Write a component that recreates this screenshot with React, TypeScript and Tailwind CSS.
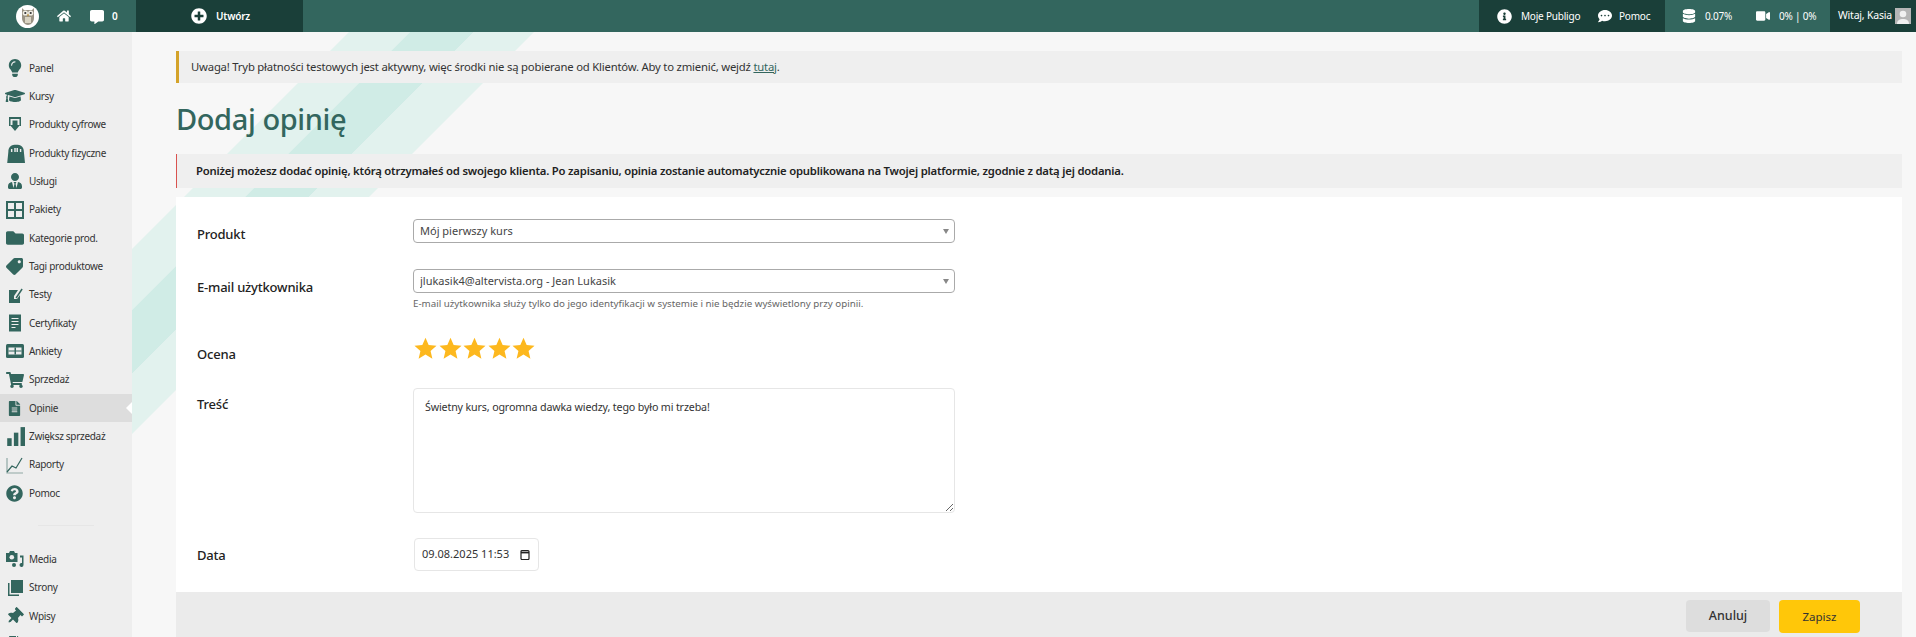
import React from "react";
import {
  FaLightbulb, FaGraduationCap, FaUserTie, FaFolder, FaTag, FaShoppingCart, FaFileAlt, FaQuestionCircle,
  FaThumbtack, FaHome, FaCommentAlt, FaPlusCircle, FaInfoCircle, FaCommentDots, FaDatabase, FaVideo,
} from "react-icons/fa";

const G = "#33665e";

const Svg = ({ children, w = 18, h = 18 }: { children: React.ReactNode; w?: number; h?: number }) => (
  <svg width={w} height={h} viewBox="0 0 18 18" fill={G}>{children}</svg>
);

const Digital = () => (
  <Svg><path d="M3 1h12v9h-1.500V3h-9v7H3z" /><path d="M6.500 4.500h5V9H14l-5 6-5-6h2.500z" /></Svg>
);
const Bag = () => (
  <Svg w={20} h={20}><path d="M3 8C3 3 6 1.500 10 1.500S17 3 17 8l1 10H2z" /><path d="M6 8V5.500M9 8V4.500M11 8V4.500M14 8V5.500" stroke="#eee" strokeWidth="1.300" /></Svg>
);
const Table = () => (
  <svg width="20" height="20" viewBox="0 0 20 20" fill="none" stroke={G} strokeWidth="2"><rect x="2" y="2" width="16" height="16" /><path d="M10 2v16M2 10h16" /></svg>
);
const Test = () => (
  <Svg><path d="M3 4h9L8 10v3h3l3-4v8H3z" /><path d="M9.500 11.500 15.500 2.500l1.200 0.900-6 9z" /></Svg>
);
const Cert = () => (
  <Svg><rect x="3" y="0.500" width="12" height="17" /><path d="M5.500 4.500h7M5.500 7.500h7M5.500 10.500h7M5.500 13.500h4" stroke="#eee" strokeWidth="1.200" /></Svg>
);
const Survey = () => (
  <svg width="20" height="18" viewBox="0 0 20 18" fill={G}><rect x="1" y="2" width="18" height="14" rx="1.500" /><path d="M3.500 5.500h13v7h-13z" fill="#eee" /><path d="M9.500 5.500h1.500v7H9.500zM3.500 8.500h13v1h-13z" fill={G} /></svg>
);
const Bars = () => (
  <Svg w={20} h={20}><rect x="2" y="11" width="4" height="7" /><rect x="8" y="6" width="4" height="12" /><rect x="14" y="1" width="4" height="17" /></Svg>
);
const Chart = () => (
  <svg width="20" height="20" viewBox="0 0 20 20" fill="none" stroke={G} strokeWidth="1.200"><path d="M2 3v15h16" opacity="0.500" /><path d="M2 17 7 11l4 2 6-10" /></svg>
);
const Media = () => (
  <svg width="20" height="18" viewBox="0 0 20 18" fill={G}><path d="M1 3h3l1-2h4l1 2h2.500v9H1z" /><circle cx="6.800" cy="7.200" r="2.300" fill="#eee" /><path d="M15 5.500h3.500V15a2 2 0 1 1-1.500-2V7.500h-2z" /><circle cx="9" cy="15" r="2" /></svg>
);
const Pages = () => (
  <Svg><path d="M5 1h12v13H5z" /><path d="M2 4h1.500v11.500H13V17H2z" /></Svg>
);
const Doc = () => <FaFileAlt size={15} color={G} />;

const menuTop: [string, React.ReactNode, boolean?][] = [
  ["Panel", <FaLightbulb size={18} color={G} />],
  ["Kursy", <FaGraduationCap size={20} color={G} />],
  ["Produkty cyfrowe", <Digital />],
  ["Produkty fizyczne", <Bag />],
  ["Usługi", <FaUserTie size={16} color={G} />],
  ["Pakiety", <Table />],
  ["Kategorie prod.", <FaFolder size={18} color={G} />],
  ["Tagi produktowe", <FaTag size={17} color={G} className="-scale-x-100" />],
  ["Testy", <Test />],
  ["Certyfikaty", <Cert />],
  ["Ankiety", <Survey />],
  ["Sprzedaż", <FaShoppingCart size={18} color={G} />],
  ["Opinie", <Doc />, true],
  ["Zwiększ sprzedaż", <Bars />],
  ["Raporty", <Chart />],
  ["Pomoc", <FaQuestionCircle size={17} color={G} />],
];
const menuBottom: [string, React.ReactNode][] = [
  ["Media", <Media />],
  ["Strony", <Pages />],
  ["Wpisy", <FaThumbtack size={17} color={G} className="rotate-45" />],
];

const Row = ({ label, icon, active }: { label: string; icon: React.ReactNode; active?: boolean }) => (
  <div className={`relative flex h-[28.33px] shrink-0 items-center ${active ? "bg-[#dddddd]" : ""}`}>
    <span className="flex w-[29px] shrink-0 justify-center">{icon}</span>
    <span className="text-[10px] tracking-[-0.3px] text-[#333333] whitespace-nowrap">{label}</span>
    {active && (
      <span className="absolute right-0 top-[8px] h-0 w-0 border-y-[6px] border-r-[6px] border-y-transparent border-r-white" />
    )}
  </div>
);

const Owl = () => (
  <svg width="16" height="20" viewBox="0 0 16 20">
    <path d="M2 2 4 4h8l2-2v10c0 4-3 7-6 7s-6-3-6-7z" fill="#9a9384" />
    <circle cx="5.300" cy="7" r="2.600" fill="#f2efe6" /><circle cx="10.700" cy="7" r="2.600" fill="#f2efe6" />
    <circle cx="5.300" cy="7" r="1.100" fill="#333" /><circle cx="10.700" cy="7" r="1.100" fill="#333" />
    <path d="M5 11h6v6H5z" fill="#d9d3c2" />
    <path d="M7 8.500h2L8 10.500z" fill="#d19a2a" />
  </svg>
);

const TopBar = () => (
  <header className="flex h-8 shrink-0 items-stretch bg-[#33665e] text-white text-[10px] tracking-[-0.2px] whitespace-nowrap">
    <div className="flex w-[136px] items-center">
      <span className="ml-4 flex h-[23px] w-[23px] items-center justify-center overflow-hidden rounded-full bg-white"><Owl /></span>
      <FaHome size={14} className="ml-[18px]" />
      <FaCommentAlt size={14} className="ml-[19px] mt-0.5" />
      <span className="ml-[8px] font-semibold">0</span>
    </div>
    <div className="flex w-[167px] items-center bg-[#1a3f39]">
      <FaPlusCircle size={16} className="ml-[55px]" />
      <span className="ml-[9px] font-semibold">Utwórz</span>
    </div>
    <div className="flex-1" />
    <div className="flex w-[186px] items-center bg-[#1a3f39]">
      <FaInfoCircle size={15} className="ml-[18px] shrink-0" />
      <span className="ml-[9px] w-[60px]">Moje Publigo</span>
      <FaCommentDots size={14} className="ml-[17px] shrink-0" />
      <span className="ml-[7px]">Pomoc</span>
    </div>
    <div className="flex w-[165px] items-center">
      <FaDatabase size={14} className="ml-[17px] shrink-0" />
      <span className="ml-[9px] w-[26px]">0.07%</span>
      <FaVideo size={14} className="ml-[25px] shrink-0" />
      <span className="ml-[9px]">0% | 0%</span>
    </div>
    <div className="flex w-[86px] items-center bg-[#1a3f39]">
      <span className="ml-2 w-[52px] text-[10.5px]">Witaj, Kasia</span>
      <span className="ml-[5px] flex h-4 w-4 items-end justify-center overflow-hidden bg-[#b5b5b5]">
        <svg width="16" height="16" viewBox="0 0 16 16" fill="#f0f0f0"><circle cx="8" cy="6" r="3.300" /><path d="M2 16c0-4 3-5 6-5s6 1 6 5z" /></svg>
      </span>
    </div>
  </header>
);

const Select = ({ value }: { value: string }) => (
  <div className="relative w-[542px]">
    <select defaultValue={value} className="block h-6 w-full appearance-none rounded-[4px] border border-[#aaaaaa] bg-white pl-[6px] text-[11px] text-[#444444] outline-none">
      <option>{value}</option>
    </select>
    <span className="absolute right-[6px] top-[10px] h-0 w-0 border-x-[3px] border-t-[5px] border-x-transparent border-t-[#888888]" />
  </div>
);

const Label = ({ children, className = "" }: { children: React.ReactNode; className?: string }) => (
  <div className={`h-[23px] w-[237px] shrink-0 pl-[21px] text-[13px] leading-4 tracking-[-0.2px] font-medium text-[#222222] ${className}`}>{children}</div>
);

const Star = () => (
  <svg width="23" height="23" viewBox="0 0 24 24" fill="#fdb81e"><path d="M12 0.800 15.300 8.400 23.500 9.100 17.300 14.500 19.200 22.600 12 18.300 4.800 22.600 6.700 14.500 0.500 9.100 8.700 8.400z" /></svg>
);

export default function App() {
  return (
    <div className="flex h-[637px] w-[1916px] flex-col overflow-hidden font-['Noto_Sans','Open_Sans',sans-serif] text-[#333333]">
      <TopBar />
      <div className="flex min-h-0 flex-1">
        <aside className="flex w-[132px] shrink-0 flex-col overflow-hidden bg-[#eeeeee] pt-[22px]">
          {menuTop.map(([l, i, a]) => <Row key={l} label={l} icon={i} active={a} />)}
          <div className="mx-[38px] mb-[19px] mt-[18px] h-px shrink-0 bg-[#e6e6e6]" />
          {menuBottom.map(([l, i]) => <Row key={l} label={l} icon={i} />)}
          <Row label="" icon={<FaFileAlt size={16} color={G} />} />
        </aside>
        <main className="relative min-w-0 flex-1 overflow-hidden bg-[#f7f7f7] pl-[44px] pr-[14px] pt-[19px]">
          <svg className="absolute left-0 top-0" width="420" height="420" viewBox="0 0 420 420">
            <polygon points="217,0 278,0 0,278 0,217" fill="#e2f2ee" />
            <polygon points="278,0 342,0 0,342 0,278" fill="#d0ece6" />
            <polygon points="342,0 402,0 0,402 0,342" fill="#e2f2ee" />
          </svg>
          <div className="relative flex flex-col">
            <div className="flex h-8 shrink-0 items-center border-l-[3px] border-[#d4a32a] bg-[#efefef] pl-3 text-[11.3px] tracking-[-0.2px] text-[#333333]">
              <span>Uwaga! Tryb płatności testowych jest aktywny, więc środki nie są pobierane od Klientów. Aby to zmienić, wejdź <span className="text-[#33665e] underline">tutaj</span>.</span>
            </div>
            <h1 className="mt-[14px] h-[57px] shrink-0 text-[29px] tracking-[-0.4px] font-medium leading-[44px] text-[#33665e]">Dodaj opinię</h1>
            <div className="flex h-[34px] shrink-0 items-center border-l border-[#d9534f] bg-[#efefef] pl-[19px] text-[11.3px] tracking-[-0.2px] font-semibold text-[#222222]">
              Poniżej możesz dodać opinię, którą otrzymałeś od swojego klienta. Po zapisaniu, opinia zostanie automatycznie opublikowana na Twojej platformie, zgodnie z datą jej dodania.
            </div>
            <section className="mt-[9px] flex shrink-0 flex-col bg-white pb-[21px] pt-[22px]">
              <div className="flex items-start">
                <Label className="pt-[7px]">Produkt</Label>
                <Select value="Mój pierwszy kurs" />
              </div>
              <div className="mt-[26px] flex items-start">
                <Label className="pt-[10px]">E-mail użytkownika</Label>
                <div>
                  <Select value="jlukasik4@altervista.org - Jean Lukasik" />
                  <p className="mt-1 h-[14px] text-[9.75px] leading-[14px] text-[#666666]">E-mail użytkownika służy tylko do jego identyfikacji w systemie i nie będzie wyświetlony przy opinii.</p>
                </div>
              </div>
              <div className="mt-[26px] flex items-start">
                <Label className="pt-[9px]">Ocena</Label>
                <div className="flex h-[23px] items-center gap-[1.6px] pl-px">
                  {[0, 1, 2, 3, 4].map((i) => <Star key={i} />)}
                </div>
              </div>
              <div className="mt-[28px] flex items-start">
                <Label className="pt-[8px]">Treść</Label>
                <textarea
                  defaultValue="Świetny kurs, ogromna dawka wiedzy, tego było mi trzeba!"
                  className="block h-[125px] w-[542px] resize rounded-[4px] border border-[#e6e6e6] bg-white px-[11px] py-[10px] text-[10.7px] tracking-[-0.15px] text-[#333333] outline-none"
                />
              </div>
              <div className="mt-[25px] flex items-start">
                <Label className="pt-[9px]">Data</Label>
                <div className="ml-px flex h-[33px] w-[125px] items-center justify-between rounded-[4px] border border-[#e6e6e6] pl-[7px] pr-[8px] text-[11px] text-[#333333]">
                  <span>09.08.2025 11:53</span>
                  <svg width="10" height="11" viewBox="0 0 10 11" fill="none" stroke="#222" strokeWidth="1.200"><rect x="1" y="1.500" width="8" height="9" rx="1" /><path d="M1 3.500h8" strokeWidth="1.800" /></svg>
                </div>
              </div>
            </section>
            <footer className="flex h-[45px] shrink-0 items-start justify-end gap-[9px] bg-[#ebebeb] pr-[42px] pt-[8px]">
              <button className="h-8 w-[84px] rounded-[4px] bg-[#dddddd] text-[12.5px] font-medium text-[#333333]">Anuluj</button>
              <button className="h-[33px] w-[81px] rounded-[4px] bg-[#ffc709] text-[11.5px] text-[#333333]">Zapisz</button>
            </footer>
          </div>
        </main>
      </div>
    </div>
  );
}
